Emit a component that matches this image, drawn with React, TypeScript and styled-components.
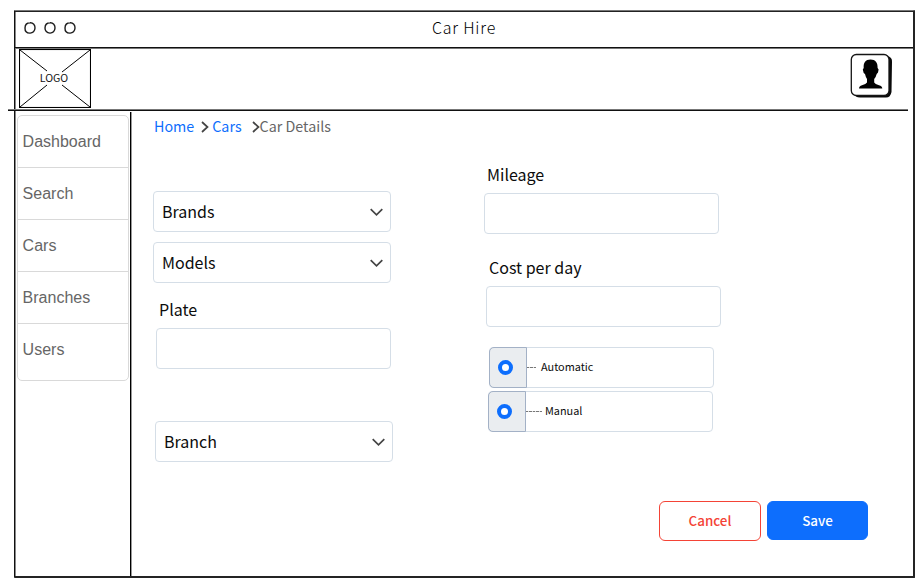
import React from "react";
import styled, { createGlobalStyle } from "styled-components";

const sans = `"Noto Sans CJK SC", "Noto Sans", sans-serif`;
const fieldLine = "#d5dee7";
const ink = "#0c0c0c";

const GlobalStyle = createGlobalStyle`
  * { box-sizing: border-box; }
  body { margin: 0; background: #fff; overflow: hidden; font-family: ${sans}; }
  button, input { font: inherit; }
`;

const Page = styled.div`
  width: 922px;
  height: 582px;
  padding: 10px 7px 4px 14px;
`;

const Window = styled.div`
  display: flex;
  flex-direction: column;
  width: 901px;
  height: 568px;
  border: 2px solid #242424;
  border-left: 1px solid #111;
  border-top: 1px solid #777;
  border-radius: 1px;
  box-shadow: inset 0 1px 0 #222, inset 1px 0 0 #888;
`;

const TitleBar = styled.header`
  display: grid;
  grid-template-columns: 1fr auto 1fr;
  align-items: center;
  height: 37px;
  padding: 0 8px;
  border-bottom: 1px solid #111;
  box-shadow: 0 1px 0 #777;
`;

const WindowDots = styled.svg`
  display: block;
  width: 54px;
  height: 14px;
  margin-top: -3px;
`;

const Title = styled.h1`
  margin: -5px 0 0 0;
  font-size: 16px;
  font-weight: 300;
  line-height: 20px;
  letter-spacing: 0.8px;
  color: #000;
`;

const Banner = styled.div`
  display: flex;
  justify-content: space-between;
  height: 61px;
  padding: 1px 19px 0 4px;
`;

const LogoBox = styled.div`
  display: grid;
  place-items: center;
  width: 72px;
  height: 59px;
  > * { grid-area: 1 / 1; }
`;

const LogoText = styled.span`
  font-size: 10.6px;
  line-height: 12px;
  color: #111;
  margin: 0 2px 1px 0;
`;

const Avatar = styled.svg`
  display: block;
  width: 44px;
  height: 47px;
  margin-top: 4px;
`;

const Rule = styled.hr`
  flex: none;
  width: 900px;
  height: 2px;
  margin: 0 0 0 -7px;
  border: 0;
  background: linear-gradient(#777 50%, #111 50%);
`;

const Body = styled.div`
  display: flex;
  flex: 1;
  min-height: 0;
`;

const Sidebar = styled.aside`
  width: 116px;
  margin-top: 1px;
  padding: 3px 1px 0 2px;
  border-right: 1px solid #000;
  box-shadow: 1px 0 0 #999;
`;

const Menu = styled.nav`
  height: 266px;
  border: 1px solid #d9d9d9;
  border-radius: 5px;
`;

const MenuItem = styled.a`
  display: block;
  height: 52px;
  padding-left: 4.6px;
  font: 16px/51px "Liberation Sans", Arial, sans-serif;
  color: #666;
  &:first-child { height: 51px; }
  & + & { border-top: 1px solid #d9d9d9; }
`;

const Main = styled.main`
  flex: 1;
  padding: 5px 45px 0 22px;
`;

const Breadcrumb = styled.nav`
  display: flex;
  align-items: center;
  height: 20px;
  margin-left: 1px;
  font-size: 14.3px;
  line-height: 20px;
  color: #666;
  white-space: nowrap;
`;

const Crumb = styled.a`
  color: #0d6efd;
`;

const CrumbArrow = styled.svg<{ $before: number; $after: number }>`
  width: 8px;
  height: 12px;
  margin: 2px ${(p) => p.$after}px 0 ${(p) => p.$before}px;
`;

const Form = styled.form`
  display: grid;
  grid-template-columns: 331px 1fr;
`;

const Column = styled.div<{ $top: number }>`
  display: flex;
  flex-direction: column;
  align-items: flex-start;
  padding-top: ${(p) => p.$top}px;
`;

const Select = styled.div<{ $gap?: number; $indent?: number }>`
  display: flex;
  align-items: center;
  justify-content: space-between;
  width: 238px;
  height: 41px;
  margin: ${(p) => p.$gap ?? 0}px 0 0 ${(p) => p.$indent ?? 0}px;
  padding: 0 7px 0 8px;
  border: 1px solid ${fieldLine};
  border-radius: 4px;
  font-size: 16px;
  line-height: 24px;
  color: ${ink};
`;

const SelectValue = styled.span`
  padding-bottom: 2px;
`;

const Field = styled.label<{ $gap: number; $indent?: number }>`
  display: block;
  margin: ${(p) => p.$gap}px 0 0 ${(p) => p.$indent ?? 0}px;
  font-size: 16px;
  line-height: 22px;
  color: ${ink};
`;

const FieldName = styled.span`
  display: block;
  height: 30px;
  padding-left: 3px;
`;

const TextInput = styled.input`
  display: block;
  width: 235px;
  height: 41px;
  border: 1px solid ${fieldLine};
  border-radius: 4px;
  outline: none;
`;

const RadioRow = styled.div<{ $gap: number; $indent: number }>`
  display: flex;
  align-items: center;
  width: 225px;
  height: 41px;
  margin: ${(p) => p.$gap}px 0 0 ${(p) => p.$indent}px;
  border: 1px solid ${fieldLine};
  border-radius: 4px;
  font-size: 10.9px;
  line-height: 16px;
  color: ${ink};
`;

const RadioName = styled.span`
  padding-bottom: 3px;
`;

const RadioCell = styled.span`
  display: flex;
  align-items: center;
  width: 38px;
  height: 41px;
  margin: -1px 0 -1px -1px;
  padding-left: 8px;
  border: 1px solid #a3b1c6;
  border-radius: 5px 0 0 5px;
  background: #eaedf0;
`;

const Radio = styled.span`
  width: 15px;
  height: 15px;
  border: 4px solid #0d6efd;
  border-radius: 50%;
  background: #fff;
`;

const Dashes = styled.span<{ $width: number; $after: number }>`
  width: ${(p) => p.$width}px;
  height: 1px;
  margin-right: ${(p) => p.$after}px;
  background: repeating-linear-gradient(90deg, #777 0 2.4px, #ddd 2.4px 3.4px);
`;

const Actions = styled.div`
  display: flex;
  justify-content: flex-end;
  gap: 6px;
  margin-top: 39px;
`;

const Button = styled.button<{ $primary?: boolean }>`
  width: ${(p) => (p.$primary ? 101 : 102)}px;
  height: ${(p) => (p.$primary ? 39 : 40)}px;
  padding: 0 0 2px;
  border: 1px solid ${(p) => (p.$primary ? "#0d6efd" : "#f44336")};
  border-radius: 6px;
  background: ${(p) => (p.$primary ? "#0d6efd" : "#fff")};
  color: ${(p) => (p.$primary ? "#fff" : "#f44336")};
  font-size: 13.4px;
  font-weight: 500;
  line-height: 20px;
`;

const ChevronIcon = styled.svg`
  width: 14px;
  height: 10px;
`;

function Chevron() {
  return (
    <ChevronIcon viewBox="0 0 14 10" fill="none" stroke="#444" strokeWidth="1.7">
      <path d="M1.700 2.200 7.500 7.800 13.300 2.200" />
    </ChevronIcon>
  );
}

function Arrow({ before, after }: { before: number; after: number }) {
  return (
    <CrumbArrow $before={before} $after={after} viewBox="0 0 8 12" fill="none" stroke="#444" strokeWidth="1.7">
      <path d="M1 1 6.500 6 1 11" />
    </CrumbArrow>
  );
}

const sections = ["Dashboard", "Search", "Cars", "Branches", "Users"];

export default function App() {
  return (
    <Page>
      <GlobalStyle />
      <Window>
        <TitleBar>
          <WindowDots viewBox="0 0 54 14" fill="none" stroke="#1c1c1c" strokeWidth="1.4">
            <path d="M7 1.8C10.200 1.600 12.200 4 12 7.100 11.900 10.300 9.800 12.200 6.900 12.100 3.900 12 1.900 9.900 2 6.900 2.100 4 4 1.900 7 1.800Z" />
            <path d="M27 1.800C30.200 1.600 32.200 4 32 7.100 31.900 10.300 29.800 12.200 26.900 12.100 23.900 12 21.900 9.900 22 6.900 22.100 4 24 1.900 27 1.800Z" />
            <path d="M47 1.800C50.200 1.600 52.200 4 52 7.100 51.900 10.300 49.800 12.200 46.900 12.100 43.900 12 41.900 9.900 42 6.900 42.100 4 44 1.900 47 1.800Z" />
          </WindowDots>
          <Title>Car Hire</Title>
        </TitleBar>
        <Banner>
          <LogoBox>
            <svg width="72" height="59" viewBox="0 0 72 59" fill="none" stroke="#000">
              <rect x="0.500" y="0.500" width="71" height="58" strokeWidth="1.100" />
              <path d="M1 1 28 22M71 1 43 23M1 58 28 36M71 58 43 36" strokeWidth="1" />
            </svg>
            <LogoText>LOGO</LogoText>
          </LogoBox>
          <Avatar viewBox="0 0 44 47">
            <path d="M6 4 37 3Q42.500 4 42 9L41.500 39Q40.500 44.500 36 44.500L10 44.500Q5 44.500 4 40Z" fill="#0a0a0a" />
            <rect x="1.300" y="1.500" width="37.700" height="41" rx="5" fill="#fff" stroke="#151515" strokeWidth="1.300" />
            <path d="M20.500 6.500C15.500 6.500 13.300 9.500 13.700 15L12.800 16.500 13.700 20 15 21Q15.800 24.500 17 26V29.500Q16 31 12 32.200 9 33 9 35.500H32.300Q32.300 33 29 32.200 25 31 24.200 29.500V26Q26 24 26.700 21L28 19.500 28.600 16.500 27.600 15C27.800 9.500 25.500 6.500 20.500 6.500Z" fill="#000" />
          </Avatar>
        </Banner>
        <Rule />
        <Body>
          <Sidebar>
            <Menu>
              {sections.map((name) => (
                <MenuItem key={name}>{name}</MenuItem>
              ))}
            </Menu>
          </Sidebar>
          <Main>
            <Breadcrumb>
              <Crumb>Home</Crumb>
              <Arrow before={7} after={3} />
              <Crumb>Cars</Crumb>
              <Arrow before={10} after={0} />
              <span>Car Details</span>
            </Breadcrumb>
            <Form>
              <Column $top={55}>
                <Select><SelectValue>Brands</SelectValue><Chevron /></Select>
                <Select $gap={10}><SelectValue>Models</SelectValue><Chevron /></Select>
                <Field $gap={15} $indent={3}>
                  <FieldName>Plate</FieldName>
                  <TextInput />
                </Field>
                <Select $gap={52} $indent={2}><SelectValue>Branch</SelectValue><Chevron /></Select>
              </Column>
              <Column $top={27}>
                <Field $gap={0}>
                  <FieldName>Mileage</FieldName>
                  <TextInput />
                </Field>
                <Field $gap={22} $indent={2}>
                  <FieldName>Cost per day</FieldName>
                  <TextInput />
                </Field>
                <RadioRow $gap={20} $indent={5}>
                  <RadioCell><Radio /></RadioCell>
                  <Dashes $width={9} $after={5} />
                  <RadioName>Automatic</RadioName>
                </RadioRow>
                <RadioRow $gap={3} $indent={4}>
                  <RadioCell><Radio /></RadioCell>
                  <Dashes $width={16} $after={3} />
                  <RadioName>Manual</RadioName>
                </RadioRow>
              </Column>
            </Form>
            <Actions>
              <Button type="button">Cancel</Button>
              <Button type="button" $primary>Save</Button>
            </Actions>
          </Main>
        </Body>
      </Window>
    </Page>
  );
}
